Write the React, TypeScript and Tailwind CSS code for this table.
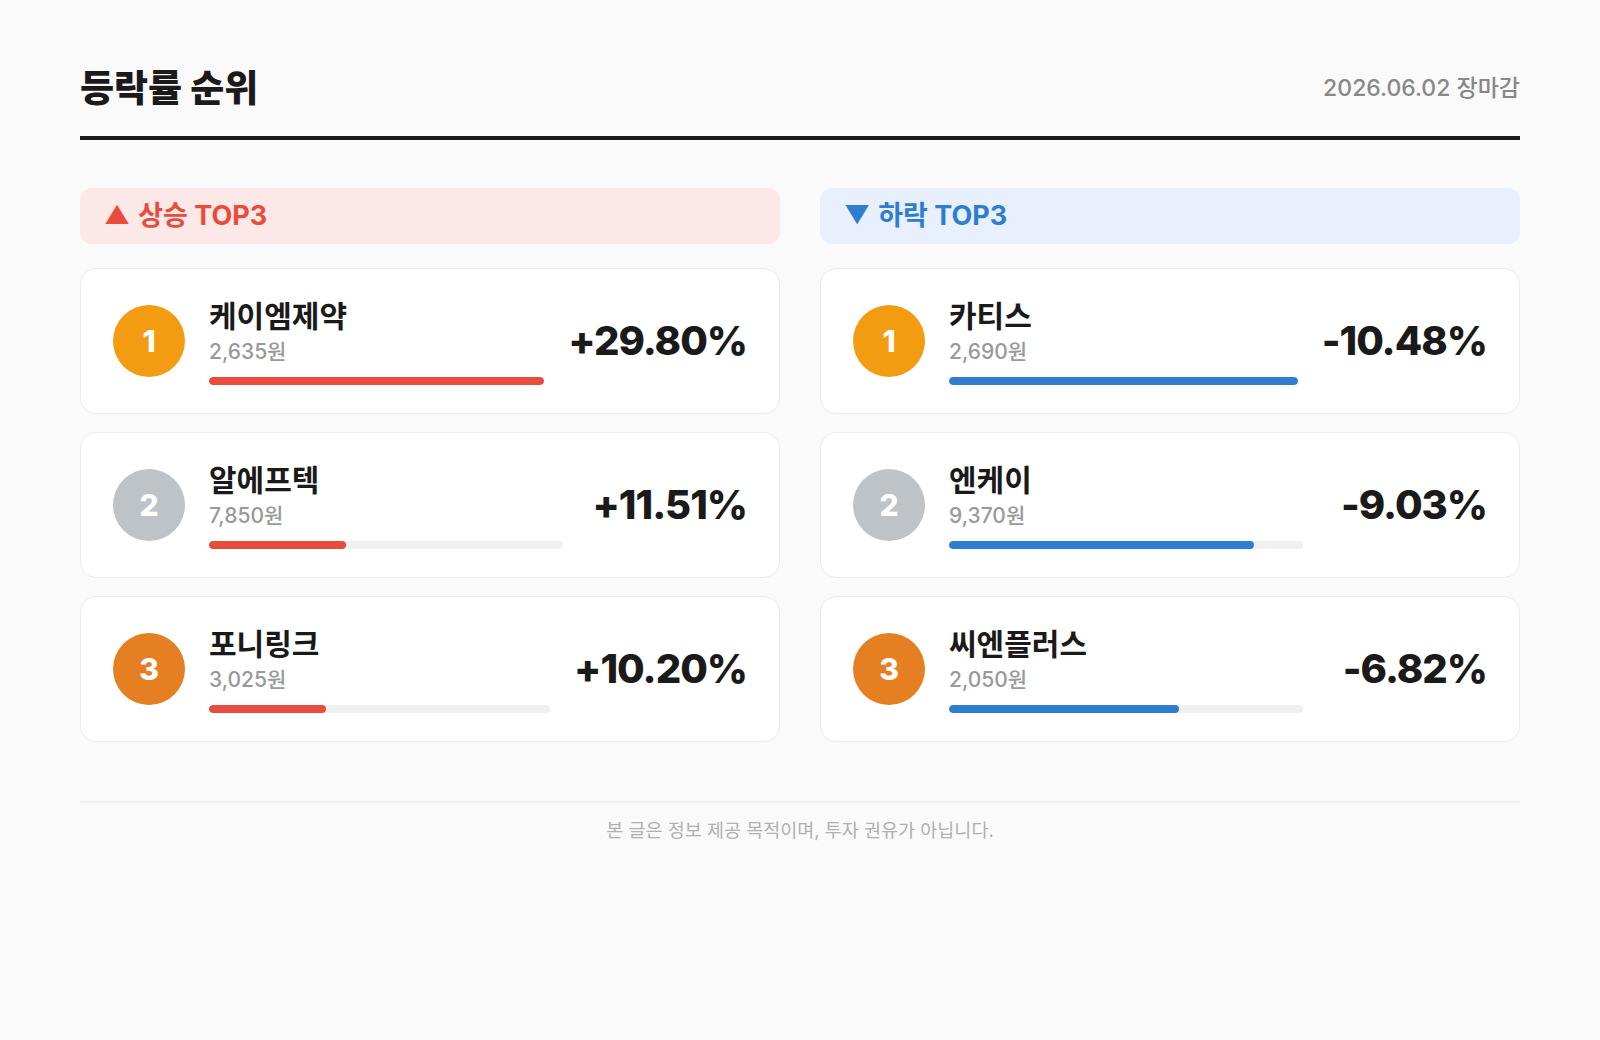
import React from "react";

interface Stock {
  rank: number;
  name: string;
  price: string;
  rate: number;
}

const gainers: Stock[] = [
  { rank: 1, name: "케이엠제약", price: "2,635원", rate: 29.8 },
  { rank: 2, name: "알에프텍", price: "7,850원", rate: 11.51 },
  { rank: 3, name: "포니링크", price: "3,025원", rate: 10.2 },
];

const losers: Stock[] = [
  { rank: 1, name: "카티스", price: "2,690원", rate: -10.48 },
  { rank: 2, name: "엔케이", price: "9,370원", rate: -9.03 },
  { rank: 3, name: "씨엔플러스", price: "2,050원", rate: -6.82 },
];

const rankColors: Record<number, string> = {
  1: "bg-[#f39c12]",
  2: "bg-[#bdc3c7]",
  3: "bg-[#e67e22]",
};

function StockCard({ stock, max, up }: { stock: Stock; max: number; up: boolean }) {
  const pct = (Math.abs(stock.rate) / max) * 100;
  const label = (up ? "+" : "") + stock.rate.toFixed(2) + "%";
  return (
    <div className="h-[146px] bg-white rounded-2xl border border-[#ececec] px-8 flex items-center">
      <div
        className={`w-[72px] h-[72px] rounded-full shrink-0 flex items-center justify-center text-white text-[30px] font-extrabold ${rankColors[stock.rank]}`}
      >
        {stock.rank}
      </div>
      <div className="flex-1 min-w-0 ml-6">
        <p className="text-[30px] leading-[36px] font-bold text-[#1a1a1a]">{stock.name}</p>
        <p className="text-[21px] leading-6 mt-[6px] font-medium text-[#999999]">{stock.price}</p>
        <div className="mt-[13px] h-2 rounded-full bg-[#f0f0f0] overflow-hidden">
          <div
            className={`h-full rounded-full ${up ? "bg-[#e74c3c]" : "bg-[#2e7dd1]"}`}
            style={{ width: `${pct}%` }}
          />
        </div>
      </div>
      <p className="ml-6 min-w-[160px] shrink-0 text-right text-[40px] font-extrabold text-[#1a1a1a] tracking-[-0.025em]">
        {label}
      </p>
    </div>
  );
}

function Column({ stocks, up }: { stocks: Stock[]; up: boolean }) {
  const max = Math.max(...stocks.map((s) => Math.abs(s.rate)));
  return (
    <div className="flex-1 min-w-0">
      <div
        className={`h-14 rounded-xl px-6 flex items-center text-[27px] font-bold ${
          up ? "bg-[#fde8e8] text-[#e74c3c]" : "bg-[#e8f0fd] text-[#2e7dd1]"
        }`}
      >
        <span className="text-[25px] mr-2">{up ? "▲" : "▼"}</span>
        {up ? "상승 TOP3" : "하락 TOP3"}
      </div>
      <div className="mt-6 flex flex-col gap-[18px]">
        {stocks.map((s) => (
          <StockCard key={s.rank} stock={s} max={max} up={up} />
        ))}
      </div>
    </div>
  );
}

export default function App() {
  return (
    <div
      className="min-h-[1040px] w-full bg-[#fafafa] px-20 pt-[67px]"
      style={{ fontFamily: 'Inter, "Noto Sans CJK KR", sans-serif' }}
    >
      <div className="flex items-center justify-between pb-[26px] border-b-4 border-[#1a1a1a]">
        <h1 className="text-[37px] leading-[43px] font-extrabold text-[#1a1a1a]">등락률 순위</h1>
        <p className="text-[23px] font-medium text-[#888888]">2026.06.02 장마감</p>
      </div>

      <div className="mt-12 flex gap-10">
        <Column stocks={gainers} up={true} />
        <Column stocks={losers} up={false} />
      </div>

      <div className="mt-[59px] border-t-2 border-[#eeeeee] pt-[15px] text-center">
        <p className="text-[18.5px] leading-6 text-[#b0b0b0]">본 글은 정보 제공 목적이며, 투자 권유가 아닙니다.</p>
      </div>
    </div>
  );
}
